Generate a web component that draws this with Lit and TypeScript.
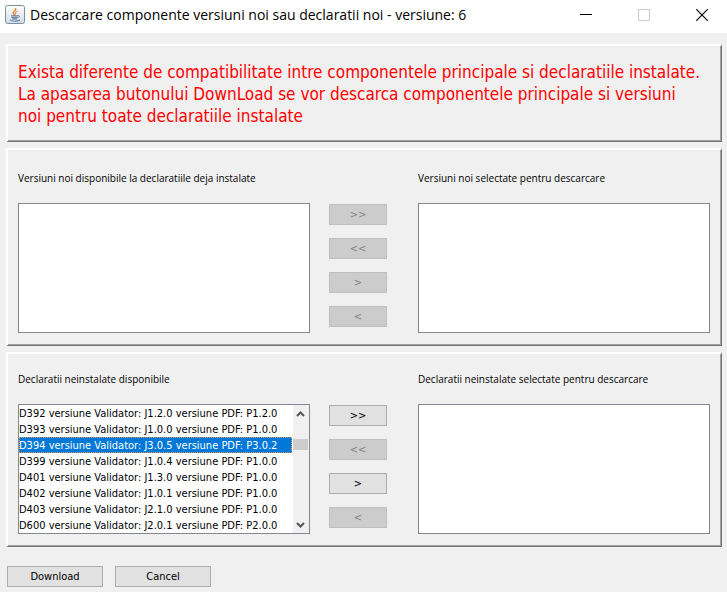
import { LitElement, html, css, svg } from "lit";
import { customElement, property } from "lit/decorators.js";

const theme = css`
  * {
    box-sizing: border-box;
  }
  button {
    height: 21px;
    padding: 0;
    border: 1px solid #adadad;
    border-radius: 0;
    background: #e1e1e1;
    color: #000;
    font: inherit;
    line-height: 19px;
  }
  button:disabled {
    border-color: #bfbfbf;
    background: #cccccc;
    color: #838383;
  }
`;

@customElement("title-bar")
class TitleBar extends LitElement {
  static styles = [
    css`
      :host {
        display: flex;
        align-items: center;
        height: 33px;
        padding: 0 0 4px 5px;
        box-sizing: border-box;
        background: #fff;
        font: 14px/20px "Open Sans", "Noto Sans", sans-serif;
        color: #000;
      }
      * {
        box-sizing: border-box;
      }
      .logo {
        flex: none;
        margin-right: 5px;
      }
      h1 {
        flex: 1;
        margin: 0;
        font: inherit;
        white-space: nowrap;
      }
      .controls {
        display: flex;
        gap: 8px;
      }
      button {
        display: grid;
        place-items: center;
        width: 50px;
        height: 28px;
        padding: 0;
        border: 0;
        background: none;
      }
    `,
  ];

  render() {
    return html`
      <svg class="logo" width="20" height="20" viewBox="0 0 20 20" aria-hidden="true">
        <defs>
          <linearGradient id="tile" x1="0" y1="0" x2="0" y2="1">
            <stop offset="0" stop-color="#ffffff" />
            <stop offset="1" stop-color="#d3dbe2" />
          </linearGradient>
        </defs>
        <rect x="0.5" y="0.5" width="19" height="18" rx="2" fill="url(#tile)" stroke="#7890a4" />
        <g fill="none" stroke-linecap="round">
          <path d="M10.6 3.6C11.2 5.8 8 6.4 8.2 8C8.3 8.8 9.2 9.2 9.4 9.9" stroke="#e8853a" stroke-width="1.5" />
          <path d="M12.2 6.2C10.4 6.9 10 7.8 10.6 9.2" stroke="#e89a5c" stroke-width="1.2" />
          <path d="M6.4 10.8H12.6M6.9 12.4H12.2M7.6 13.9H11.6" stroke="#5f83a3" stroke-width="1.1" />
          <path d="M13 10.6C15.2 10.1 15 12.2 12.8 12.8" stroke="#5f83a3" stroke-width="1" />
          <path d="M5.2 15C6.5 16.4 12.6 16.4 14.6 15.2" stroke="#5f83a3" stroke-width="1.1" />
        </g>
      </svg>
      <h1>Descarcare componente versiuni noi sau declaratii noi - versiune: 6</h1>
      <div class="controls">
        <button aria-label="Minimize">
          <svg width="12" height="12" viewBox="0 0 12 12"><path d="M0 5.5H12" stroke="#000" /></svg>
        </button>
        <button aria-label="Maximize" disabled>
          <svg width="12" height="12" viewBox="0 0 12 12">
            <rect x="0.5" y="0.5" width="11" height="11" fill="none" stroke="#cccccc" />
          </svg>
        </button>
        <button aria-label="Close">
          <svg width="12" height="12" viewBox="0 0 12 12">
            <path d="M0.3 0.3L11.7 11.7M11.7 0.3L0.3 11.7" stroke="#000" stroke-width="1.2" />
          </svg>
        </button>
      </div>
    `;
  }
}

@customElement("transfer-panel")
class TransferPanel extends LitElement {
  @property() sourceLabel = "";
  @property() targetLabel = "";
  @property({ attribute: false }) items: string[] = [];
  @property({ type: Number }) selected = -1;

  static styles = [
    theme,
    css`
      :host {
        display: grid;
        grid-template-columns: minmax(0, 1fr) auto minmax(0, 1fr);
        row-gap: 17px;
      }
      label {
        font-family: "Open Sans", "Noto Sans", sans-serif;
        font-size: 10px;
        line-height: 16px;
        white-space: nowrap;
      }
      .target-label {
        grid-column: 3;
      }
      .list {
        display: flex;
        height: 130px;
        border: 1px solid #828790;
        background: #fff;
      }
      select {
        flex: 1;
        min-width: 0;
        margin: 0;
        padding: 0;
        border: 0;
        border-radius: 0;
        outline: 0;
        overflow: hidden;
        background: #fff;
        color: #000;
        font: inherit;
        scrollbar-width: none;
      }
      option {
        height: 16px;
        min-height: 16px;
        padding: 2px 0 0;
        border: 0;
        line-height: 14px;
      }
      option:checked {
        outline: 1px dotted #e0965a;
        outline-offset: -1px;
        background: linear-gradient(#0078d7, #0078d7);
        -webkit-text-fill-color: #fff;
      }
      .scroll {
        display: flex;
        flex-direction: column;
        width: 16px;
        margin-left: 1px;
        background: #f0f0f0;
      }
      .scroll svg {
        flex: none;
      }
      .track {
        flex: 1;
        padding: 17px 1px 0 0;
      }
      .thumb {
        height: 11px;
        background: #cdcdcd;
      }
      .moves {
        display: flex;
        flex-direction: column;
        gap: 13px;
        padding: 1px 31px 0 19px;
      }
      .moves button {
        width: 58px;
      }
    `,
  ];

  private arrow(points: string) {
    return html`<svg width="16" height="17" viewBox="0 0 16 17">
      ${svg`<path d=${points} fill="none" stroke="#555" stroke-width="2" />`}
    </svg>`;
  }

  render() {
    const empty = this.items.length === 0;
    return html`
      <label for="source">${this.sourceLabel}</label>
      <label class="target-label" for="target">${this.targetLabel}</label>
      <div class="list">
        <select id="source" size="8">
          ${this.items.map((item, i) => html`<option ?selected=${i === this.selected}>${item}</option>`)}
        </select>
        ${empty
          ? ""
          : html`<div class="scroll">
              ${this.arrow("M4 11L7.5 7.5L11 11")}
              <div class="track"><div class="thumb"></div></div>
              ${this.arrow("M4 7L7.5 10.5L11 7")}
            </div>`}
      </div>
      <div class="moves">
        <button ?disabled=${empty}>&gt;&gt;</button>
        <button disabled>&lt;&lt;</button>
        <button ?disabled=${empty}>&gt;</button>
        <button disabled>&lt;</button>
      </div>
      <div class="list"><select id="target" size="8"></select></div>
    `;
  }
}

@customElement("app-root")
class AppRoot extends LitElement {
  static styles = [
    theme,
    css`
      :host {
        display: block;
        min-height: 100vh;
        background: #f0f0f0;
        color: #000;
        font: 11px/16px "DejaVu Sans Condensed", "DejaVu Sans", sans-serif;
      }
      main {
        display: flex;
        flex-direction: column;
        gap: 6px;
        padding: 11px 5px 5px 6px;
      }
      section {
        border: 2px solid;
        border-color: #fff #747474 #747474 #fff;
        border-right-width: 1px;
        border-bottom-width: 1px;
        box-shadow: inset -1px -1px #a0a0a0;
        padding: 20px 11px 12px 10px;
      }
      .notice {
        padding-top: 15px;
        padding-bottom: 14px;
      }
      .notice p {
        margin: 0;
        color: #f00;
        font-size: 17px;
        line-height: 22px;
      }
      .available {
        padding-top: 17px;
      }
      .actions {
        display: flex;
        gap: 12px;
        padding: 13px 1px 0;
      }
      .actions button {
        width: 96px;
      }
    `,
  ];

  private declarations = [
    "D392 versiune Validator: J1.2.0 versiune PDF: P1.2.0",
    "D393 versiune Validator: J1.0.0 versiune PDF: P1.0.0",
    "D394 versiune Validator: J3.0.5 versiune PDF: P3.0.2",
    "D399 versiune Validator: J1.0.4 versiune PDF: P1.0.0",
    "D401 versiune Validator: J1.3.0 versiune PDF: P1.0.0",
    "D402 versiune Validator: J1.0.1 versiune PDF: P1.0.0",
    "D403 versiune Validator: J2.1.0 versiune PDF: P1.0.0",
    "D600 versiune Validator: J2.0.1 versiune PDF: P2.0.0",
  ];

  render() {
    return html`
      <title-bar></title-bar>
      <main>
        <section class="notice">
          <p>
            Exista diferente de compatibilitate intre componentele principale si declaratiile instalate.<br />
            La apasarea butonului DownLoad se vor descarca componentele principale si versiuni<br />
            noi pentru toate declaratiile instalate
          </p>
        </section>
        <section>
          <transfer-panel
            .sourceLabel=${"Versiuni noi disponibile la declaratiile deja instalate"}
            .targetLabel=${"Versiuni noi selectate pentru descarcare"}
          ></transfer-panel>
        </section>
        <section class="available">
          <transfer-panel
            .sourceLabel=${"Declaratii neinstalate disponibile"}
            .targetLabel=${"Declaratii neinstalate selectate pentru descarcare"}
            .items=${this.declarations}
            .selected=${2}
          ></transfer-panel>
        </section>
        <div class="actions">
          <button>Download</button>
          <button>Cancel</button>
        </div>
      </main>
    `;
  }
}
